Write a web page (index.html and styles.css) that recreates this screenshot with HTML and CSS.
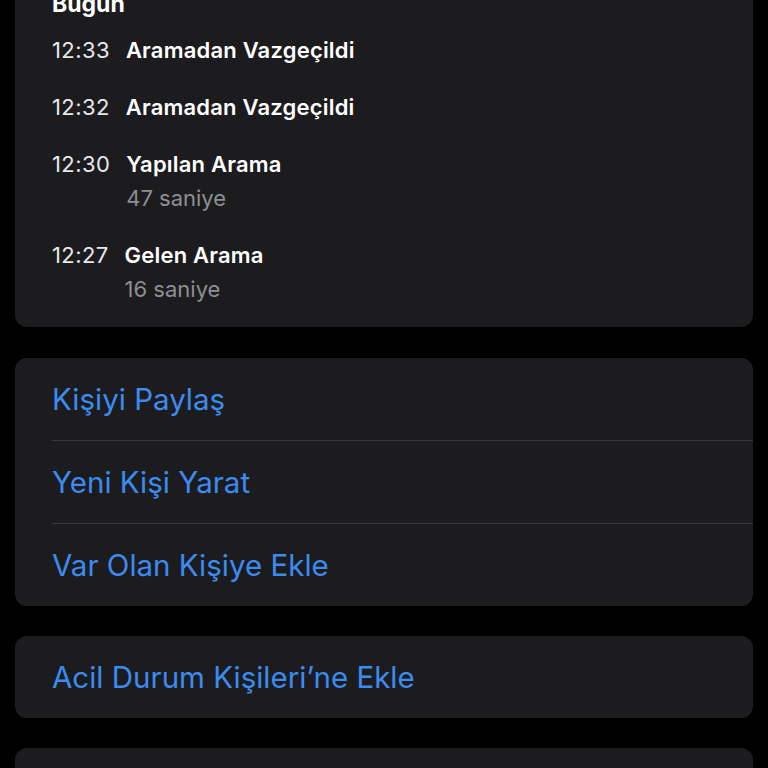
FILE: index.html
```html
<!DOCTYPE html>
<html lang="tr">
<head>
<meta charset="utf-8">
<link rel="stylesheet" href="styles.css">
</head>
<body>
<div class="page">
  <section class="card history">
    <h2 class="day">Bugün</h2>
    <div class="call">
      <span class="time">12:33</span>
      <div class="info"><div class="title">Aramadan Vazgeçildi</div></div>
    </div>
    <div class="call">
      <span class="time">12:32</span>
      <div class="info"><div class="title">Aramadan Vazgeçildi</div></div>
    </div>
    <div class="call">
      <span class="time">12:30</span>
      <div class="info"><div class="title">Yapılan Arama</div><div class="sub">47 saniye</div></div>
    </div>
    <div class="call">
      <span class="time">12:27</span>
      <div class="info"><div class="title">Gelen Arama</div><div class="sub">16 saniye</div></div>
    </div>
  </section>

  <section class="card actions">
    <div class="action">Kişiyi Paylaş</div>
    <div class="action">Yeni Kişi Yarat</div>
    <div class="action">Var Olan Kişiye Ekle</div>
  </section>

  <section class="card actions">
    <div class="action">Acil Durum Kişileri’ne Ekle</div>
  </section>

  <section class="card actions">
    <div class="action">&nbsp;</div>
  </section>
</div>
</body>
</html>
```

FILE: styles.css
```css
html, body {
  margin: 0;
  padding: 0;
  background: #000;
  overflow: hidden;
}
body {
  font-family: Inter, "Noto Sans", "DejaVu Sans", sans-serif;
  color: #fff;
  -webkit-font-smoothing: antialiased;
}
.page {
  margin-top: -40px;
  padding: 0 15px;
  display: flex;
  flex-direction: column;
  gap: 30px;
}
.card {
  background: #1c1c1e;
  border-radius: 12px;
}
.history {
  padding: 30px 0 21px 37px;
}
.day {
  margin: 0 0 15px;
  font-size: 23px;
  line-height: 28px;
  font-weight: 700;
}
.call {
  display: flex;
  gap: 16px;
  margin-bottom: 23px;
}
.call:last-child {
  margin-bottom: 0;
}
.time {
  font-size: 22px;
  line-height: 34px;
  letter-spacing: 0.4px;
  color: #e8e8ea;
  font-weight: 400;
}
.title {
  font-size: 22px;
  line-height: 34px;
  letter-spacing: 0.2px;
  font-weight: 600;
}
.sub {
  font-size: 22px;
  line-height: 34px;
  color: #8e8e93;
}
.actions {
  padding-left: 37px;
}
.action {
  height: 82px;
  display: flex;
  align-items: center;
  font-size: 29.5px;
  color: #3b8bf0;
  border-bottom: 1px solid #38383a;
}
.action:last-child {
  border-bottom: none;
}
.card:first-child + .actions {
  margin-top: 1px;
}
```
